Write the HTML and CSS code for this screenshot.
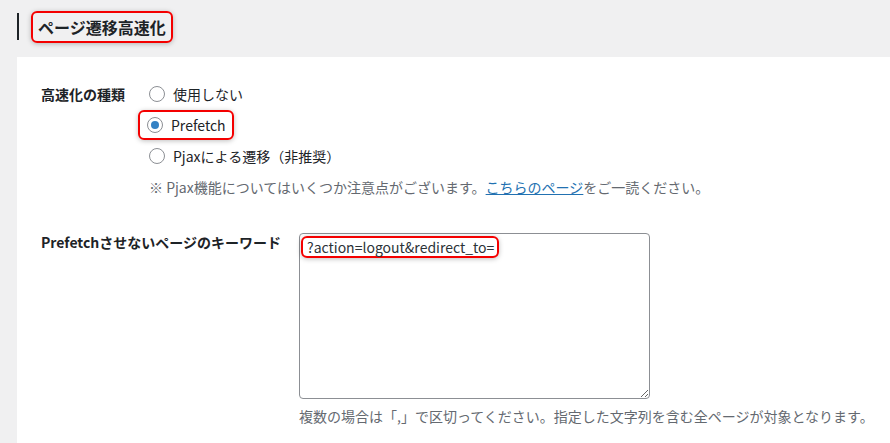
FILE: index.html
```html
<!DOCTYPE html>
<html lang="ja">
<head>
    <meta charset="utf-8">
    <link rel="stylesheet" href="styles.css">
</head>
<body>
    <h2 class="section-title"><span class="mark">ページ遷移高速化</span></h2>

    <div class="panel">
        <div class="row row-type">
            <div class="label">高速化の種類</div>
            <div class="field">
                <label class="choice"><input type="radio" name="speed" value="off"> 使用しない</label>
                <label class="choice"><span class="mark mark-sm"><input type="radio" name="speed" value="prefetch" checked> Prefetch</span></label>
                <label class="choice"><input type="radio" name="speed" value="pjax"> Pjaxによる遷移（非推奨）</label>
                <p class="note">※ Pjax機能についてはいくつか注意点がございます。<a href="#">こちらのページ</a>をご一読ください。</p>
            </div>
        </div>

        <div class="row row-keyword">
            <div class="label">Prefetchさせないページのキーワード</div>
            <div class="field">
                <div class="textarea-wrap">
                    <textarea id="keywords" spellcheck="false"></textarea>
                    <span class="mark mark-text">?action=logout&amp;redirect_to=</span>
                </div>
                <p class="note">複数の場合は「,」で区切ってください。指定した文字列を含む全ページが対象となります。</p>
            </div>
        </div>
    </div>
</body>
</html>
```

FILE: styles.css
```css
body {
    margin: 0;
    background-color: #f0f0f1;
    color: #1d2327;
    font-family: "Noto Sans CJK JP", "Open Sans", sans-serif;
    font-size: 14px;
    overflow: hidden;
}

.section-title {
    margin: 13px 0 0 17px;
    padding-left: 12px;
    border-left: 2px solid #1d2327;
    height: 27px;
    display: flex;
    align-items: center;
    font-size: 16px;
    font-weight: bold;
    line-height: 1;
}

.section-title .mark {
    padding: 6px 5px 6px 5px;
}

.mark {
    border: 2px solid #f40000;
    border-radius: 6px;
    box-shadow: 0 1px 5px rgba(0, 0, 0, 0.25);
}

.panel {
    margin: 17px 0 0 17px;
    background-color: #fff;
    padding: 26px 20px 8px 24px;
    box-sizing: border-box;
    min-height: calc(100vh - 57px);
}

.row {
    display: flex;
}

.label {
    flex-shrink: 0;
    font-weight: bold;
    line-height: 22px;
}

.row-type .label {
    width: 108px;
}

.row-keyword {
    margin-top: 33px;
}

.row-keyword .label {
    width: 258px;
}

.field {
    display: flex;
    flex-direction: column;
    align-items: flex-start;
}

.choice {
    display: flex;
    align-items: center;
    height: 22px;
    margin-bottom: 9px;
}

.choice .mark-sm {
    display: flex;
    align-items: center;
    padding: 2px 6px 2px 7px;
    margin: -4px 0 -4px -11px;
    height: 22px;
}

input[type="radio"] {
    appearance: none;
    -webkit-appearance: none;
    width: 16px;
    height: 16px;
    margin: 0 8px 0 0;
    border: 1px solid #8c8f94;
    border-radius: 50%;
    background: #fff;
    display: inline-flex;
    align-items: center;
    justify-content: center;
}

input[type="radio"]:checked::before {
    content: "";
    width: 8px;
    height: 8px;
    border-radius: 50%;
    background-color: #3582c4;
}

.note {
    margin: 0;
    color: #646970;
    line-height: 22px;
    white-space: nowrap;
}

.note a {
    color: #2271b1;
}

.textarea-wrap {
    position: relative;
    margin-top: 2px;
}

textarea {
    display: block;
    width: 351px;
    height: 166px;
    box-sizing: border-box;
    border: 1px solid #8c8f94;
    border-radius: 4px;
    font-family: inherit;
    font-size: 14px;
}

.mark-text {
    position: absolute;
    left: 2px;
    top: 3px;
    padding: 0 3px 0 4px;
    line-height: 18px;
    color: #2c3338;
}

.row-keyword .note {
    margin-top: 6px;
}
```
